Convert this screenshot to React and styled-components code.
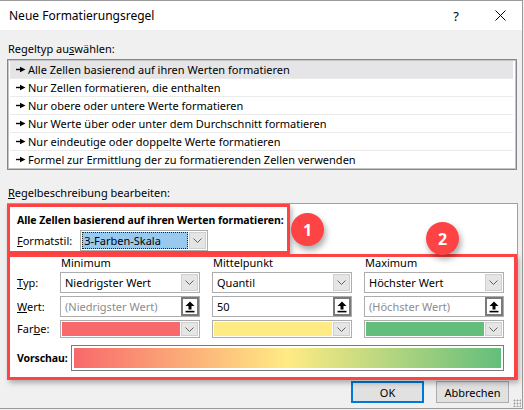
import React from 'react';
import styled, { createGlobalStyle } from 'styled-components';

const Global = createGlobalStyle`
  html, body { margin: 0; padding: 0; background: #f0f0f0; }
  body { font-family: "Noto Sans", "Liberation Sans", sans-serif; font-size: 11px; color: #000; }
`;

const RED = '#fd4343';

const ruleTypes = [
  'Alle Zellen basierend auf ihren Werten formatieren',
  'Nur Zellen formatieren, die enthalten',
  'Nur obere oder untere Werte formatieren',
  'Nur Werte über oder unter dem Durchschnitt formatieren',
  'Nur eindeutige oder doppelte Werte formatieren',
  'Formel zur Ermittlung der zu formatierenden Zellen verwenden',
];

const columns = [
  { head: 'Minimum', type: 'Niedrigster Wert', value: '(Niedrigster Wert)', muted: true, color: '#f8696b' },
  { head: 'Mittelpunkt', type: 'Quantil', value: '50', muted: false, color: '#ffeb84' },
  { head: 'Maximum', type: 'Höchster Wert', value: '(Höchster Wert)', muted: true, color: '#63be7b' },
];

const Bullet = () => (
  <svg width="10" height="7" viewBox="0 0 10 7">
    <rect x="0" y="2.8" width="5" height="1.4" fill="#000" />
    <polygon points="4,0.8 9.5,3.5 4,6.2" fill="#000" />
  </svg>
);

const Chevron = () => (
  <svg width="9" height="5" viewBox="0 0 9 5">
    <polyline points="0.5,0.5 4.5,4.5 8.5,0.5" fill="none" stroke="#606060" strokeWidth="1" />
  </svg>
);

const UploadIcon = () => (
  <svg width="10" height="12" viewBox="0 0 10 12">
    <polygon points="5,0.5 9.5,5 6.5,5 6.5,8.5 3.5,8.5 3.5,5 0.5,5" fill="#000" />
    <rect x="0.5" y="9.8" width="9" height="1.6" fill="#000" />
  </svg>
);

export default function App() {
  return (
    <>
      <Global />
      <Dialog>
        <TitleBar>
          <Title>Neue Formatierungsregel</Title>
          <TitleButton>?</TitleButton>
          <TitleButton>
            <svg width="11" height="11" viewBox="0 0 11 11">
              <path d="M0.5 0.5 L10.5 10.5 M10.5 0.5 L0.5 10.5" stroke="#000" strokeWidth="1" />
            </svg>
          </TitleButton>
        </TitleBar>
        <Body>
          <SectionLabel>Regeltyp au<u>s</u>wählen:</SectionLabel>
          <ListBox>
            {ruleTypes.map((t, i) => (
              <ListItem key={t} $selected={i === 0}>
                <Bullet />
                <span>{t}</span>
              </ListItem>
            ))}
          </ListBox>
          <SectionLabel $top={15}><u>R</u>egelbeschreibung bearbeiten:</SectionLabel>
          <Panel>
            <Callout $width={283} $height={50}>
              <Heading>Alle Zellen basierend auf ihren Werten formatieren:</Heading>
              <StyleRow>
                <FieldLabel><u>F</u>ormatstil:</FieldLabel>
                <Select $width={128}>
                  <SelectedValue>3-Farben-Skala</SelectedValue>
                  <DropButton><Chevron /></DropButton>
                </Select>
              </StyleRow>
            </Callout>
            <Callout $height={126}>
              <Grid>
                <span />
                {columns.map(c => <ColHead key={c.head}>{c.head}</ColHead>)}
                <FieldLabel><u>T</u>yp:</FieldLabel>
                {columns.map(c => (
                  <Select key={c.head}>
                    <SelectText>{c.type}</SelectText>
                    <DropButton><Chevron /></DropButton>
                  </Select>
                ))}
                <FieldLabel><u>W</u>ert:</FieldLabel>
                {columns.map(c => (
                  <Select key={c.head}>
                    <SelectText $muted={c.muted}>{c.value}</SelectText>
                    <RefButton><UploadIcon /></RefButton>
                  </Select>
                ))}
                <FieldLabel>Far<u>b</u>e:</FieldLabel>
                {columns.map(c => (
                  <Select key={c.head} $short>
                    <Swatch $color={c.color} />
                    <DropButton><Chevron /></DropButton>
                  </Select>
                ))}
              </Grid>
              <PreviewRow>
                <PreviewLabel>Vorschau:</PreviewLabel>
                <Preview>
                  <Gradient />
                </Preview>
              </PreviewRow>
            </Callout>
            <Badge $x={299} $y={25}>1</Badge>
            <Badge $x={434} $y={34}>2</Badge>
          </Panel>
        </Body>
        <Footer>
          <Button $primary>OK</Button>
          <Button>Abbrechen</Button>
          <Grip />
        </Footer>
      </Dialog>
    </>
  );
}

const Dialog = styled.div`
  position: relative;
  width: 522px;
  height: 407px;
  border-top: 1px solid #9a9a9a;
  border-right: 1px solid #9a9a9a;
  border-bottom: 1px solid #9a9a9a;
  background: #f0f0f0;
  display: flex;
  flex-direction: column;
`;

const TitleBar = styled.div`
  height: 29px;
  background: #fff;
  display: flex;
  align-items: center;
  padding-left: 9px;
`;

const Title = styled.div`
  flex: 1;
  font-size: 12px;
`;

const TitleButton = styled.div`
  width: 44px;
  display: flex;
  justify-content: center;
  align-items: center;
  font-size: 13px;
`;

const Body = styled.div`
  padding: 0 5px 0 7px;
`;

const SectionLabel = styled.div`
  height: 16px;
  line-height: 16px;
  margin-top: ${p => p.$top || 11}px;
  margin-bottom: 2px;
  padding-left: 1px;
`;

const ListBox = styled.div`
  height: 108px;
  border: 1px solid #828790;
  box-shadow: inset 0 0 0 1px #c4c4c4;
  background: #fff;
  padding: 1px 3px 0 2px;
`;

const ListItem = styled.div`
  height: 17px;
  display: flex;
  align-items: center;
  gap: 2px;
  padding-left: 6px;
  border-bottom: 1px solid #ebebeb;
  background: ${p => (p.$selected ? '#e5e5e8' : '#fff')};
  &:last-child { border-bottom: none; }
`;

const Panel = styled.div`
  position: relative;
  background: #fff;
  border: 1px solid #a0a0a0;
  border-bottom: none;
  display: flex;
  flex-direction: column;
  margin-right: -1px;
`;

const Callout = styled.div`
  box-sizing: border-box;
  width: ${p => (p.$width ? `${p.$width}px` : 'calc(100% + 1px)')};
  height: ${p => p.$height}px;
  margin-left: -1px;
  border: 3px solid ${RED};
  box-shadow: 2px 3px 5px rgba(0, 0, 0, 0.28);
  padding: 5px 6px 0 7px;
  background: #fff;
`;

const Heading = styled.div`
  font-weight: bold;
  line-height: 16px;
  white-space: nowrap;
  font-size: 10.5px;
  letter-spacing: -0.05px;
`;

const StyleRow = styled.div`
  display: flex;
  align-items: center;
  gap: 8px;
  margin-top: 2px;
`;

const FieldLabel = styled.div`
  line-height: 16px;
  align-self: center;
  white-space: nowrap;
`;

const Select = styled.div`
  box-sizing: border-box;
  width: ${p => (p.$width ? `${p.$width}px` : 'auto')};
  height: ${p => (p.$short ? 18 : 21)}px;
  border: 1px solid #adadad;
  background: #fff;
  display: flex;
  align-items: stretch;
  padding: 1px;
`;

const SelectText = styled.div`
  flex: 1;
  display: flex;
  align-items: center;
  padding-left: 3px;
  color: ${p => (p.$muted ? '#8c8c8c' : '#000')};
  white-space: nowrap;
  overflow: hidden;
`;

const SelectedValue = styled(SelectText)`
  background: #99c9ef;
  outline: 1px dotted #222;
  outline-offset: -1px;
  padding-left: 2px;
`;

const DropButton = styled.div`
  box-sizing: border-box;
  width: 17px;
  margin-left: 1px;
  background: #e5e5e5;
  border: 1px solid #cfcfcf;
  display: flex;
  align-items: center;
  justify-content: center;
`;

const RefButton = styled.div`
  box-sizing: border-box;
  width: 18px;
  margin: -1px -1px -1px 1px;
  background: #fff;
  border: 2px solid #7a7a7a;
  display: flex;
  align-items: center;
  justify-content: center;
`;

const Swatch = styled.div`
  flex: 1;
  background: ${p => p.$color};
`;

const Grid = styled.div`
  display: grid;
  grid-template-columns: 31px 140px 140px 140px;
  grid-template-rows: 12px 21px 21px 18px;
  column-gap: 12px;
  row-gap: 3px;
  margin-top: -5px;
`;

const ColHead = styled.div`
  line-height: 12px;
  padding-left: 1px;
`;

const PreviewRow = styled.div`
  display: flex;
  align-items: center;
  gap: 4px;
  margin-top: 7px;
`;

const PreviewLabel = styled.div`
  font-weight: bold;
  width: 50px;
  font-size: 10.5px;
  letter-spacing: -0.1px;
`;

const Preview = styled.div`
  box-sizing: border-box;
  width: 433px;
  height: 26px;
  border: 1px solid #7a7a7a;
  padding: 2px;
  background: #fff;
`;

const Gradient = styled.div`
  height: 100%;
  background: linear-gradient(to right, #f8696b, #ffeb84 50%, #63be7b);
`;

const Badge = styled.div`
  position: absolute;
  left: ${p => p.$x}px;
  top: ${p => p.$y}px;
  width: 33px;
  height: 33px;
  margin: -16px 0 0 -16px;
  border-radius: 50%;
  background: ${RED};
  color: #fff;
  font-weight: bold;
  font-size: 16px;
  display: flex;
  align-items: center;
  justify-content: center;
  box-shadow: 2px 4px 6px rgba(0, 0, 0, 0.35);
`;

const Footer = styled.div`
  display: flex;
  justify-content: flex-end;
  gap: 12px;
  padding: 1px 13px 0 0;
`;

const Button = styled.div`
  box-sizing: border-box;
  width: 73px;
  height: 22px;
  background: #e1e1e1;
  border: ${p => (p.$primary ? '2px solid #0078d7' : '1px solid #adadad')};
  display: flex;
  align-items: center;
  justify-content: center;
`;

const Grip = styled.div`
  position: absolute;
  right: 1px;
  bottom: 1px;
  width: 8px;
  height: 8px;
  background-image: radial-gradient(circle, #a0a0a0 0.9px, transparent 1.1px);
  background-size: 3px 3px;
`;
